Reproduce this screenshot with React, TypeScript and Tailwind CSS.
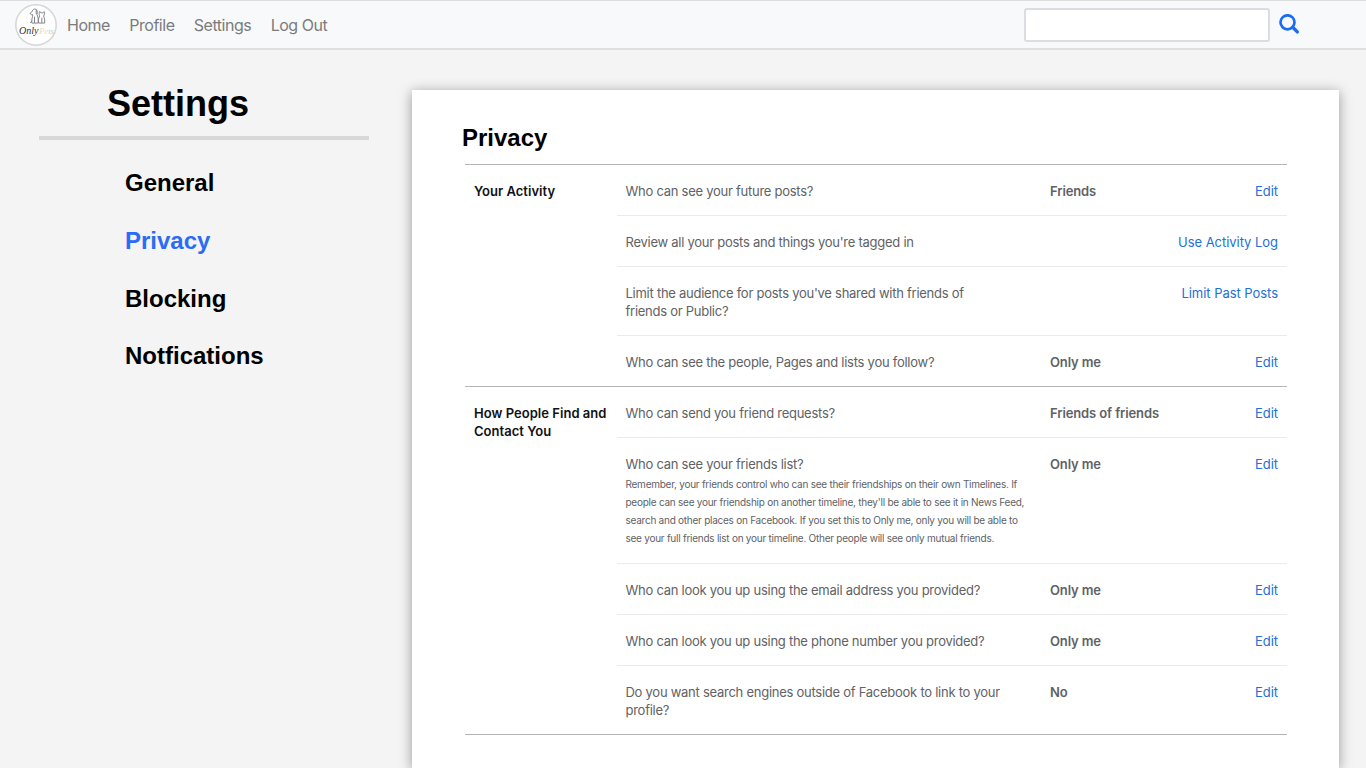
import type { ReactNode } from "react";

type Row = { q: string[]; note?: string[]; value?: string; action: string };

const activity: Row[] = [
  { q: ["Who can see your future posts?"], value: "Friends", action: "Edit" },
  { q: ["Review all your posts and things you're tagged in"], action: "Use Activity Log" },
  { q: ["Limit the audience for posts you've shared with friends of", "friends or Public?"], action: "Limit Past Posts" },
  { q: ["Who can see the people, Pages and lists you follow?"], value: "Only me", action: "Edit" },
];

const contact: Row[] = [
  { q: ["Who can send you friend requests?"], value: "Friends of friends", action: "Edit" },
  {
    q: ["Who can see your friends list?"],
    note: [
      "Remember, your friends control who can see their friendships on their own Timelines. If",
      "people can see your friendship on another timeline, they'll be able to see it in News Feed,",
      "search and other places on Facebook. If you set this to Only me, only you will be able to",
      "see your full friends list on your timeline. Other people will see only mutual friends.",
    ],
    value: "Only me",
    action: "Edit",
  },
  { q: ["Who can look you up using the email address you provided?"], value: "Only me", action: "Edit" },
  { q: ["Who can look you up using the phone number you provided?"], value: "Only me", action: "Edit" },
  { q: ["Do you want search engines outside of Facebook to link to your", "profile?"], value: "No", action: "Edit" },
];

function SettingRow({ row, first }: { row: Row; first: boolean }) {
  return (
    <div className={`flex border-t pt-[17px] pb-[15px] pl-[9px] pr-[9px] ${first ? "border-transparent" : "border-[#ebebeb]"}`}>
      <div className="w-[424.5px] shrink-0 whitespace-nowrap text-[#606266]">
        {row.q.map((line) => (
          <p key={line} className="tracking-[-0.26px]">{line}</p>
        ))}
        {row.note && (
          <div className="pt-[2px] pb-px text-[10px] tracking-[-0.25px]">
            {row.note.map((line) => (
              <p key={line}>{line}</p>
            ))}
          </div>
        )}
      </div>
      <p className="grow font-semibold tracking-[-0.12px] text-[#606266]">{row.value}</p>
      <a className="whitespace-nowrap tracking-[-0.04px] text-[#216fdb]">{row.action}</a>
    </div>
  );
}

function Section({ title, rows }: { title: ReactNode; rows: Row[] }) {
  return (
    <section className="relative flex">
      <h3 className="w-[151.5px] shrink-0 whitespace-nowrap border-t border-[#b4b5b7] pt-[17px] pl-[9px] font-semibold tracking-[0.03px] text-[#101114]">
        {title}
      </h3>
      <div className="grow">
        {rows.map((row, i) => (
          <SettingRow key={row.q[0]} row={row} first={i === 0} />
        ))}
      </div>
      <div className="absolute inset-x-0 top-0 h-px bg-[#b4b5b7]" />
    </section>
  );
}

function Logo() {
  return (
    <svg className="ml-[15px] size-[42px] shrink-0" viewBox="0 0 42 42" fill="none">
      <circle cx="21" cy="21" r="20.2" fill="#fff" stroke="#d5d5d5" strokeWidth="1.500" />
      <g stroke="#77797b" strokeWidth="0.9" strokeLinejoin="round" strokeLinecap="round">
        <path d="M16.800 18.700c-.5-3.500.8-5 1-8c-1.300.3-2.500-.2-2.700-1.500l2.100-1.700c.3-2.200 2-2.900 3.700-2.200c1.600.8 1.700 3 1 5c1.200 2.400 1.500 5.200 1.300 8.400z" />
        <path d="M23.600 18.700c-1.200-3.200.9-5.200 1-7c-.7-1.300-.4-3 0-4.200l1.500 1.300h1.600l1.500-1.300c.4 1.600.3 3.400-.6 4.500c.7 2 1.400 4 1.100 6.700z" />
        <path d="M19.500 13v5.500M21.200 6.500v3.200M26.800 14v4.500M16.800 17l-1.300 1.600" />
      </g>
      <g fontStyle="italic" fontFamily="Liberation Serif, serif">
        <text x="4" y="29.500" fill="#333" fontSize="10">Only</text>
        <text x="24.300" y="29.500" fontSize="8.500" fill="url(#pastel)">Pets</text>
      </g>
      <defs>
        <linearGradient id="pastel">
          <stop offset="0" stopColor="#f6cfae" />
          <stop offset="0.4" stopColor="#efe0a8" />
          <stop offset="0.65" stopColor="#addcc8" />
          <stop offset="1" stopColor="#cfb9e6" />
        </linearGradient>
      </defs>
    </svg>
  );
}

export default function App() {
  return (
    <div className="flex h-[768px] w-[1366px] flex-col overflow-hidden bg-[#f4f4f4] font-['Inter',sans-serif]">
      <header className="flex h-[50px] shrink-0 items-center border-t border-b-2 border-t-[#dcdddf] border-b-[#dedfe0] bg-[#f8f9fb]">
        <Logo />
        <nav className="ml-[10px] flex gap-[19.300px] text-[16px] leading-6 tracking-[-0.47px] text-[#7b7c7d]">
          <a>Home</a>
          <a>Profile</a>
          <a>Settings</a>
          <a>Log Out</a>
        </nav>
        <input className="ml-auto h-[34px] w-[246px] rounded-[3px] border-2 border-[#dadde1] bg-white" aria-label="Search" />
        <svg className="ml-[9px] mr-[66px] size-[21px]" viewBox="0 0 21 21" fill="none" stroke="#1b6cf2">
          <circle cx="8.500" cy="8.300" r="7" strokeWidth="2.700" />
          <path d="M13.700 13.300l4.600 4.600" strokeWidth="3.400" strokeLinecap="round" />
        </svg>
      </header>
      <div className="flex min-h-0 grow">
        <aside className="w-[412px] shrink-0 pl-[39px] pt-[33px] font-['Liberation_Sans',Arial,sans-serif] font-bold text-black">
          <h1 className="w-[330px] border-b-4 border-[#d8d8d8] pb-[12px] pl-[68px] text-[36px] leading-[41px]">Settings</h1>
          <nav className="flex flex-col gap-[30px] pl-[86px] pt-[29px] text-[24px] leading-[27.800px]">
            <a>General</a>
            <a className="text-[#2a6df4]">Privacy</a>
            <a>Blocking</a>
            <a>Notfications</a>
          </nav>
        </aside>
        <main className="mt-10 w-[927px] shrink-0 bg-white pl-[53px] pt-[34px] shadow-[0_2px_12px_rgba(0,0,0,0.38)]">
          <h2 className="-ml-[3px] h-[40px] font-['Liberation_Sans',Arial,sans-serif] text-[24px] font-bold leading-[28px] text-black">Privacy</h2>
          <div className="w-[822px] border-b border-[#b4b5b7] text-[13px] leading-[18px]">
            <Section title="Your Activity" rows={activity} />
            <Section title={<>How People Find and<br />Contact You</>} rows={contact} />
          </div>
        </main>
      </div>
    </div>
  );
}
